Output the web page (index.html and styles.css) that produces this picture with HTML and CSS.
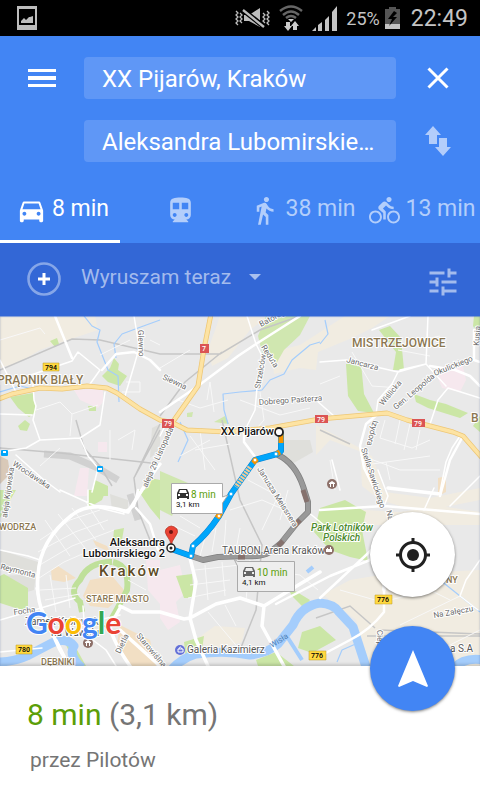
FILE: index.html
```html
<!DOCTYPE html>
<html lang="pl">
<head>
<meta charset="utf-8">
<meta name="viewport" content="width=device-width, initial-scale=1">
<title>Trasa</title>
<link rel="stylesheet" href="styles.css">
</head>
<body>
<div class="status">
  <svg class="status-shot" width="20" height="24" viewBox="0 0 20 24"><path fill="#bdbdbd" fill-rule="evenodd" d="M0 0H20V24H0ZM2 3V19H18V3Z"/><path fill="#bdbdbd" d="M4 17V15L7 12L9 14L12 11H13L16 10V17Z"/></svg>
  <svg width="35" height="24" viewBox="0 0 35 24" fill="none" stroke="#bdbdbd"><path stroke-width="1.300" d="M1 5L3 7L1 9L3 11L1 13L3 15L1 17L3 19M5 7L7 9L5 11L7 13L5 15L7 17M28 7L30 9L28 11L30 13L28 15L30 17M32 5L34 7L32 9L34 11L32 13L34 15L32 17L34 19"/><path fill="#bdbdbd" stroke="none" d="M9 9H14L25 2V21L14 15H9Z"/><path stroke="#000" stroke-width="5" d="M8 4L28 20"/><path stroke-width="2.300" d="M8 4L29 21"/></svg>
  <svg width="24" height="26" viewBox="0 0 24 26" fill="none" stroke="#666" stroke-width="2.4"><path d="M1 6Q12 -3 23 6M4 10Q12 3 20 10M7 13Q12 9 17 13"/><path fill="#ccc" stroke="none" d="M9 14H15L12 17ZM7 17H11V21H13L9 26L5 21H7ZM14 25V21H12L16 16L20 21H18V25Z"/></svg>
  <svg width="25" height="25" viewBox="0 0 25 25" fill="#c4c4c4"><path d="M0 25L4 21V25ZM6 19L10 16V25H6ZM13 14L17 10V25H13ZM20 6L25 0V25H20Z"/></svg>
  <span class="status-percent">25%</span>
  <svg width="15" height="22" viewBox="0 0 15 22"><path fill="#555" d="M4 0H11V2H15V17H0V2H4Z"/><path fill="#c4c4c4" d="M0 17H15V22H0Z"/><path fill="#000" d="M9 4L3 12H7L4 19L12 10H8L12 6Z"/></svg>
  <span class="status-time">22:49</span>
</div>

<header class="route">
  <form class="route-form">
    <button type="button" class="icon-btn" aria-label="Menu"><svg width="28" height="18" viewBox="0 0 28 18"><path fill="#fff" d="M0 0H28V3H0ZM0 7H28V11H0ZM0 15H28V18H0Z"/></svg></button>
    <input class="field" type="text" aria-label="Punkt początkowy" value="XX Pijarów, Kraków">
    <button type="button" class="icon-btn" aria-label="Zamknij"><svg width="22" height="22" viewBox="0 0 22 22"><path stroke="#fff" stroke-width="3" d="M1.500 1.500L20.500 20.500M20.500 1.500L1.500 20.500"/></svg></button>
    <input class="field field-to" type="text" aria-label="Cel podróży" value="Aleksandra Lubomirskiego 2">
    <button type="button" class="icon-btn" aria-label="Zamień"><svg width="28" height="30" viewBox="0 0 28 30"><path fill="#b3cdfb" d="M9 0L17 9H13V18H5V9H1ZM15 12H23V21H27L19 30L11 21H15Z"/></svg></button>
  </form>
  <nav class="modes" aria-label="Środek transportu">
    <button type="button" class="mode mode-on"><svg width="31" height="31" viewBox="0 0 24 24"><path d="M18.920 6.010C18.720 5.420 18.160 5 17.500 5h-11c-.66 0-1.210.42-1.420 1.010L3 12v8c0 .55.450 1 1 1h1c.55 0 1-.45 1-1v-1h12v1c0 .55.450 1 1 1h1c.55 0 1-.45 1-1v-8l-2.080-5.990zM6.500 16c-.83 0-1.500-.67-1.500-1.500S5.670 13 6.500 13s1.500.67 1.500 1.500S7.330 16 6.500 16zm11 0c-.83 0-1.500-.67-1.500-1.500s.67-1.500 1.500-1.500 1.500.67 1.500 1.500-.67 1.500-1.500 1.500zM5 11l1.500-4.500h11L19 11H5z"/></svg><span>8 min</span></button>
    <button type="button" class="mode" aria-label="Transport publiczny"><svg width="31" height="31" viewBox="0 0 24 24"><path d="M12 2c-4.420 0-8 .5-8 4v9.500C4 17.430 5.570 19 7.500 19L6 20.500v.5h12v-.5L16.500 19c1.930 0 3.500-1.570 3.500-3.500V6c0-3.500-3.580-4-8-4zM7.500 17c-.83 0-1.500-.67-1.500-1.500S6.670 14 7.500 14s1.500.67 1.500 1.500S8.330 17 7.500 17zm3.500-6H6V6h5v5zm5.500 6c-.83 0-1.500-.67-1.500-1.500s.67-1.500 1.500-1.500 1.500.67 1.500 1.500-.67 1.500-1.500 1.500zm1.500-6h-5V6h5v5z"/></svg></button>
    <button type="button" class="mode"><svg width="31" height="31" viewBox="0 0 24 24"><path d="M13.500 5.500c1.100 0 2-.9 2-2s-.9-2-2-2-2 .9-2 2 .9 2 2 2zM9.800 8.900L7 23h2.100l1.800-8 2.100 2v6h2v-7.500l-2.100-2 .6-3C14.800 12 16.800 13 19 13v-2c-1.900 0-3.500-1-4.300-2.400l-1-1.600c-.4-.6-1-1-1.700-1-.3 0-.5.1-.8.1L6 8.300V13h2V9.600l1.800-.7"/></svg><span>38 min</span></button>
    <button type="button" class="mode"><svg width="31" height="31" viewBox="0 0 24 24"><path d="M15.500 5.500c1.100 0 2-.9 2-2s-.9-2-2-2-2 .9-2 2 .9 2 2 2zM5 12c-2.800 0-5 2.200-5 5s2.200 5 5 5 5-2.200 5-5-2.200-5-5-5zm0 8.500c-1.900 0-3.500-1.600-3.500-3.500s1.600-3.500 3.500-3.500 3.500 1.600 3.500 3.500-1.600 3.500-3.500 3.500zm5.800-10l2.400-2.400.8.8c1.300 1.300 3 2.100 5.100 2.100V9c-1.500 0-2.700-.6-3.600-1.500l-1.900-1.900c-.5-.4-1-.6-1.600-.6s-1.100.2-1.400.6L7.800 8.400c-.4.4-.6.9-.6 1.400 0 .6.200 1.100.6 1.400L11 14v5h2v-6.200l-2.200-2.300zM19 12c-2.800 0-5 2.200-5 5s2.200 5 5 5 5-2.200 5-5-2.200-5-5-5zm0 8.500c-1.900 0-3.500-1.600-3.500-3.500s1.600-3.500 3.500-3.500 3.500 1.600 3.500 3.500-1.600 3.500-3.500 3.500z"/></svg><span>13 min</span></button>
  </nav>
</header>

<div class="options">
  <button type="button" class="icon-btn" aria-label="Dodaj przystanek"><svg width="34" height="34" viewBox="0 0 34 34" fill="none"><circle cx="17" cy="17" r="15.500" stroke="#86a6e8" stroke-width="2.600"/><path stroke="#fff" stroke-width="3" d="M11 17H23M17 11V23"/></svg></button>
  <div class="depart">
    <select class="depart-select" aria-label="Czas wyjazdu"><option>Wyruszam teraz</option></select>
    <svg class="depart-caret" width="12" height="6" viewBox="0 0 12 6"><path fill="#a9c0ee" d="M0 0H12L6 6Z"/></svg>
  </div>
  <button type="button" class="icon-btn" aria-label="Opcje trasy"><svg width="36" height="36" viewBox="0 0 24 24"><path fill="#a3bbed" d="M3 17v2h6v-2H3zM3 5v2h10V5H3zm10 16v-2h8v-2h-8v-2h-2v6h2zM7 9v2H3v2h4v2h2V9H7zm14 4v-2H11v2h10zm-6-4h2V7h4V5h-4V3h-2v6z"/></svg></button>
</div>

<main class="map">
<svg class="map-canvas" viewBox="0 316 480 350" preserveAspectRatio="xMidYMid slice" role="img" aria-label="Mapa Krakowa z trasą">
  <rect y="316" width="480" height="350" fill="#e9e9e9"/>
  <!-- suburbs -->
  <g fill="#f1ece1">
    <path d="M0 316H95L98 330L80 336L62 342L40 350L20 362L0 368ZM220 316H268L250 330L228 358L212 366L208 350ZM272 352L300 345L345 316H390L372 328L352 338L318 352L316 370L300 368L274 374Z"/>
    <path d="M316 425L360 448L362 486L380 500L420 512L480 500V488L430 498L385 492L372 456L330 440L316 455ZM320 525H480V512L440 506L400 512L330 508ZM320 596L350 580L380 575L480 570V666H370L356 620L325 596ZM195 640L215 626L245 628L242 642L215 650Z"/>
  </g>
  <path fill="#dfdfdb" d="M282 440H310L313 452L292 464L284 458ZM0 550L38 562V572L0 566ZM110 494L128 500V512L112 510ZM0 576L36 574L34 590L0 600ZM152 428L160 424V450L150 458Z"/>
  <path fill="#f6e8ee" d="M74 390L103 388V402L98 408L80 400ZM98 442H107V452H98ZM80 468H89L87 496H74ZM444 366L462 362L466 380L460 392L442 388L438 378ZM160 570L180 565L186 592L176 602L180 622L168 630L160 618ZM146 560H160V604L148 590Z"/>
  <path fill="#f2dfc4" d="M90 580L112 576L124 590L120 598L108 608L90 606L83 596ZM51 570L58 566L76 578L64 582L52 580ZM120 625L150 640L156 666H132L116 650ZM438 478L446 476V492L438 496ZM93 540L107 546L110 552L96 546Z"/>
  <path fill="#d9c9b8" d="M0 456L8 460L10 474L0 484Z"/>
  <!-- parks -->
  <g fill="#cbe6a6">
    <path d="M50 341L57 338L59 344L55 347ZM114 358L119 364L118 370L127 376L120 386L108 382L102 376L110 368ZM10 397L33 393L36 412L29 417L18 408ZM18 426L25 420L30 424L27 431L20 430ZM88 406L96 406V411L89 411ZM95 480L108 486L108 496H92ZM150 478L160 480V495L145 490Z"/>
    <path d="M266 316H310L300 335L284 350L276 364L262 352L258 336ZM214 422L225 416L229 424ZM187 413L193 412L192 417H187ZM160 471L195 486V502H178L172 516L160 510Z" opacity=".85"/>
    <path d="M379 330L390 326L401 338L404 370H393L396 352ZM346 364L361 363L364 394L374 413L358 411L348 396ZM414 394L430 400L446 404L468 413L460 418L428 408L416 402ZM474 316H480V338L473 326ZM473 426L480 416V432Z"/>
    <path d="M320 508L345 500L366 512L362 530L368 561L350 557L330 550L314 532ZM0 576L4 574L28 588V612L0 603ZM0 490H16L0 518ZM88 490H106L102 500L88 508ZM138 490H160V520L150 508ZM114 530L124 528L121 546L113 540ZM176 576L192 574L194 598L184 598ZM184 642L204 636L201 656L186 660ZM287 586L310 600L304 608L292 596ZM302 632L320 626L336 640L312 653L298 648ZM256 660L276 652L294 666H258ZM66 645L76 648L86 666H76Z"/>
    <path fill="none" stroke="#bfe09a" stroke-width="6" d="M112 562Q88 562 80 580Q68 592 80 602L82 612M113 562Q130 566 127 590Q116 612 106 628"/>
  </g>
  <!-- rail -->
  <g fill="none" stroke="#c6c6c6" stroke-width="1.500">
    <path d="M0 370L72 339L100 340L160 354L220 354L260 330L300 316M160 416L185 382L222 352M0 448L60 453L160 464M76 420L84 448L100 466L112 486M160 430L134 478L138 510L150 540M160 424L134 478M222 420L240 500L262 545L256 610L240 650M320 430L350 444M316 618L350 606L375 628M367 636H480M380 630L480 634"/>
    <path stroke-width="7" d="M44 454L70 456L98 468L118 480M130 494L138 520" opacity=".7"/>
  </g>
  <!-- water -->
  <g fill="none" stroke="#a4cdfc" stroke-linejoin="round">
    <path stroke-width="1.200" d="M84 316L92 326L100 330L97 342L108 370L118 376L119 402M160 320L138 328L122 334L114 344L116 358M228 424L224 410L223 394L240 392L262 390L270 380L284 374L292 360L310 345L320 342M180 422L188 440L178 462M320 344L328 334L325 320M337 662L342 650L360 642M440 580L480 612M0 392L20 386L33 389"/>
    <path stroke-width="9" d="M-4 662Q14 662 27 656L50 644Q66 636 74 646Q68 656 82 668M172 669Q182 658 196 654Q226 650 250 655Q268 653 278 644L293 625Q301 606 320 603Q334 604 339 612L353 627L366 667M454 668Q464 657 484 660"/>
    <path stroke-width="4" d="M288 638L302 660M307 572L313 567" />
  </g>
  <!-- minor streets -->
  <g fill="none" stroke="#f8f8f8" stroke-width="1">
    <path d="M0 340L40 328L45 334M100 355L130 340M36 410L60 402L72 414L98 405M72 414L70 436M40 466L60 448M118 440L135 430L132 450M110 430V460M160 368L190 350M150 340L160 345M122 392H140V382H126M178 400L200 408L228 400M207 400L210 382L214 412M240 400L280 415L310 408M260 392L264 420L250 436M190 436L215 470M195 450L230 444M180 456L210 440M200 430L205 470M320 384L340 376M352 352L372 386M372 386L400 388M398 350L430 356M420 340L440 336M385 420L380 438L412 448L430 440M400 420L395 444M410 424L404 450M420 430L416 450M360 455L400 470L440 470M372 464L430 456M386 462L390 480M330 460L335 490"/>
    <path d="M45 520L70 556M58 514L85 548M72 508L96 540M86 502L104 530M40 540L70 520L100 510M38 552L75 532L108 520M38 566L72 546L114 530M36 580L64 562L96 548M45 600L80 594M50 575L56 612M66 575L70 608M40 590L76 588M190 560L196 540L214 530M200 556L206 534M212 552L216 528M224 550L226 520M236 550L240 528M195 570L240 565L262 572M205 565L208 600M222 562L225 596M190 585L230 580M188 598L226 590M250 560L246 600M262 570L300 575L318 590M208 612L240 650M225 605L236 626M180 516L200 528M172 525L195 536M230 510L262 500L285 510M248 480L278 496L262 530M288 490L280 520M84 620L110 626M128 580L146 590M128 594L145 600M390 600L430 590L450 600M400 625L460 596M340 590L375 600M440 650L480 630"/>
  </g>
  <g fill="none" stroke="#fff" stroke-linejoin="round" stroke-linecap="round">
    <path stroke-width="1.500" d="M0 360L16 392M28 376L72 361L78 352L100 370L90 384M33 384L34 400L36 406L33 420L40 440L80 438L100 425L105 392M0 414L32 415M0 452L26 448L40 440M80 438L88 456L98 468L92 492M16 455L44 480L60 492M125 396L134 366L138 352M0 550L28 556L40 560M134 316L140 352M247 316L256 344L262 356L264 366L257 388L255 410L244 432M340 490L332 460M60 490L100 508L124 514M88 508V490M0 620L75 598M83 606L85 634L106 650L116 666M82 624L120 615M0 652L42 648M57 640L70 666M36 588L40 606L56 632M400 370L426 364M428 316L426 364L446 386M426 364L398 372L346 360L320 362M398 372L392 384L378 400L376 414M430 424L438 400L448 388L480 398M378 470L388 496L384 506M440 492L446 462L452 448L460 436M480 476L450 506M372 330L410 316M160 436L166 424M316 400L334 416M480 560L466 580L460 596L478 610M308 512L330 530M424 510L434 488"/>
    <path stroke-width="2.500" d="M55 316L72 358M102 370L116 354L134 352L150 360L160 370M160 412L198 386L238 356L256 344L300 316M244 432L244 442L256 458M378 414L366 424L360 446L364 468L376 492L384 506M124 512L134 506L138 490M136 508L150 524L158 550M480 386L470 376L455 370L430 366M480 362L474 360V330L478 330M320 598L380 542L370 560L330 576L276 604M384 506L320 510M384 506L480 514M384 590V612Q370 630 350 640L320 656M463 436L450 460L440 496"/>
    <path stroke-width="3.500" d="M142 490L128 512Q90 500 72 515Q40 540 38 575Q36 600 44 615L60 650L68 664M190 558L196 582L190 618M160 612L184 619L190 618L216 604L240 598L264 606Q290 590 320 572M190 618L196 640L208 666M264 606L262 626L284 666M120 606L132 612L160 612M142 490Q152 474 160 464M440 494L388 488M120 608L110 626Q112 640 130 666M160 666L120 630M384 570L384 590"/>
  </g>
  <!-- main roads -->
  <g fill="none" stroke-linejoin="round">
    <g stroke="#eec775" stroke-width="5"><path d="M-4 400L12 394L40 388L62 389L87 386L107 388L117 393L140 409L160 420L173 423L187 430L227 432L270 428L320 419L387 413L407 420L453 432L463 436L484 460"/><path d="M211 314L204 349L198 386L172 423"/></g>
    <g stroke="#fde3a3" stroke-width="3.500"><path d="M-4 400L12 394L40 388L62 389L87 386L107 388L117 393L140 409L160 420L173 423L187 430L227 432L270 428L320 419L387 413L407 420L453 432L463 436L484 460"/><path d="M211 314L204 349L198 386L172 423"/></g>
  </g>
  <!-- routes -->
  <g fill="none" stroke-linejoin="round" stroke-linecap="round">
    <path stroke="#808080" stroke-width="6" d="M278 455Q295 463 303 486L308 502V512L297 523L281 543L270 552Q262 557 248 556L218 557L203 560L191 556"/>
    <path stroke="#999" stroke-width="4.500" d="M278 455Q295 463 303 486L308 502V512L297 523L281 543L270 552Q262 557 248 556L218 557L203 560L191 556"/>
    <path stroke="#85716d" stroke-width="5" stroke-linecap="butt" d="M303 490L307 502M300 520L294 526M283 541L278 546M245 557H238"/>
    <path stroke="#0b80cf" stroke-width="6" d="M281 434V451L277 454L255 460L231 494L219 516Q207 534 193 546L191 556L174 550"/>
    <path stroke="#00a6fb" stroke-width="5" d="M281 434V451L277 454L255 460L231 494L219 516Q207 534 193 546L191 556L174 550"/>
    <path stroke="#f79400" stroke-width="5" stroke-linecap="butt" d="M281 433V443M280 452L276 454M257 459L253 463M221 512L217 518"/>
    <path stroke="#f6c994" stroke-width="5" stroke-linecap="butt" stroke-dasharray="2 1" d="M250 467L236 487"/>
  </g>
  <g fill="#fff" stroke="#00a6fb" stroke-width="1"><circle cx="276" cy="454" r="2"/><circle cx="231" cy="494" r="2"/><circle cx="193" cy="546" r="2"/><circle cx="191" cy="556" r="2"/><circle cx="255" cy="460" r="2" stroke="#f79400"/><circle cx="219" cy="516" r="2" stroke="#f79400"/></g>
  <!-- street names -->
  <g class="t-street">
    <text transform="translate(138 330) rotate(88)">Glewno</text>
    <text transform="translate(12 465) rotate(34)">Wrocławska</text>
    <text transform="translate(7 518) rotate(-82)">aleja Kijowska</text>
    <text transform="translate(147 488) rotate(-66)">aleja 29 Listopada</text>
    <text transform="translate(162 379) rotate(25)">Siewna</text>
    <text transform="translate(261 327) rotate(-28)">Batorego</text>
    <text transform="translate(261 347) rotate(58)">Reduta</text>
    <text transform="translate(260 389) rotate(-80)">Strzelców</text>
    <text transform="translate(259 405) rotate(-4)">Dobrego Pasterza</text>
    <text transform="translate(257 469) rotate(58)">Janusza Meissnera</text>
    <text transform="translate(346 362) rotate(15)">Jancarza</text>
    <text transform="translate(383 406) rotate(-50)">Wiślicka</text>
    <text transform="translate(396 410) rotate(-40)">Gen. Leopolda</text>
    <text transform="translate(435 376) rotate(-22)">Okulickiego</text>
    <text transform="translate(373 420) rotate(104)">Izydora</text>
    <text transform="translate(361 449) rotate(72)">Stella-Sawickiego</text>
    <text transform="translate(386 511) rotate(75)">Na</text>
    <text transform="translate(0 569) rotate(14)">Reymonta</text>
    <text transform="translate(14 615) rotate(-8)">Focha</text>
    <text transform="translate(120 654) rotate(-64)">Dietla</text>
    <text transform="translate(136 636) rotate(50)">Starowiślna</text>
    <text transform="translate(434 618) rotate(-10)">Na Załęczu</text>
    <text transform="translate(377 630) rotate(88)">Ciep</text>
    <text transform="translate(479 346) rotate(-86)">Kusia</text>
    <text class="t-water" transform="translate(272 648) rotate(-32)">Wisła</text>
  </g>
  <!-- districts -->
  <g class="t-area">
    <text x="-3" y="384" font-size="12">PRĄDNIK BIAŁY</text>
    <text x="352" y="347" font-size="12">MISTRZEJOWICE</text>
    <text x="471" y="422" font-size="12">B</text>
    <text x="-1" y="530" font-size="9">WODRZA</text>
    <text x="86" y="602" font-size="9">STARE MIASTO</text>
    <text x="41" y="665" font-size="9">DĘBNIKI</text>
    <text x="446" y="583" font-size="9">NY</text>
  </g>
  <text class="t-city" x="99" y="576">Kraków</text>
  <g class="t-park"><text x="311" y="531">Park Lotników</text><text x="323" y="541">Polskich</text></g>
  <g class="t-poi"><text x="222" y="554">TAURON Arena Kraków</text><text x="187" y="653">Galeria Kazimierz</text><text x="450" y="652">a S.A</text><text x="25" y="625">Zamek Królewski</text><text x="51" y="636">na Wawelu</text></g>
  <!-- shields -->
  <g class="shield">
    <path fill="#ffd940" stroke="#b99b26" stroke-width=".5" d="M43 363H59V371H43ZM16 645H32V654H16ZM375 595H392V604H375ZM309 651H326V660H309Z"/>
    <text x="51" y="370">794</text><text x="24" y="652">780</text><text x="383" y="602">776</text><text x="317" y="658">776</text>
    <path fill="#db5454" d="M200 344H209V353H200ZM162 419H174V428H162ZM315 415H328V423H315ZM412 419H425V427H412Z"/>
    <g fill="#fff"><text x="204" y="351">7</text><text x="168" y="426">79</text><text x="321" y="422">79</text><text x="418" y="426">79</text></g>
  </g>
  <!-- places -->
  <g fill="#00a6fb"><rect x="1" y="450" width="7" height="6" rx="1"/><rect x="97" y="466" width="6" height="6" rx="1"/></g>
  <path fill="#fff" d="M3 451H6V453H3ZM98 468H102V470H98Z"/>
  <g fill="#8d7069"><circle cx="332" cy="484" r="5"/><circle cx="329" cy="550" r="5"/><circle cx="88" cy="643" r="5"/></g>
  <path fill="#fff" d="M329 483L332 481L335 483V484H329ZM330 484H331V487H330ZM333 484H334V487H333ZM326 552V549H327V548H328V549H330V547H331V549H332V552ZM85 642L88 640L91 642V643H85ZM86 643H87V646H86ZM89 643H90V646H89Z"/>
  <circle cx="180" cy="650" r="5" fill="#6471d8"/><path fill="none" stroke="#fff" d="M178 649H183V652H178ZM179 649Q180 645 182 649"/>
  <!-- pins -->
  <path fill="#ea4335" stroke="#a52714" stroke-width=".6" d="M171 546Q171 541 167 536Q164 532 166 529Q171 523 177 529Q179 532 175 537Q172 541 171 546Z"/><circle cx="171" cy="532" r="2" fill="#6d1410"/>
  <circle cx="171" cy="548" r="4" fill="#fff" stroke="#222" stroke-width="1.500"/><circle cx="171" cy="548" r="1.500" fill="#222"/>
  <circle cx="279" cy="432" r="4" fill="#fff" stroke="#222" stroke-width="1.800"/>
  <g class="t-pin"><text x="274" y="435">XX Pijarów</text><text x="165" y="546">Aleksandra</text><text x="165" y="557">Lubomirskiego 2</text></g>
  <!-- route callouts -->
  <path fill="#fff" stroke="#aaa" d="M171.500 483.500H222.500V497L228 495L222.500 503V513.500H171.500Z"/>
  <path fill="#eee" stroke="#aaa" d="M237.500 561.500H294.500V591.500H237.500V566L234 559Z"/>
  <path fill="#333" fill-rule="evenodd" d="M177 499V493L179 489H187L189 493V499H187V498H179V499ZM179 493H187L186 490H180ZM178 494V496H180V494ZM186 494V496H188V494Z"/>
  <path fill="#666" fill-rule="evenodd" d="M243 577V571L245 567H253L255 571V577H253V576H245V577ZM245 571H253L252 568H246ZM244 572V574H246V572ZM252 572V574H254V572Z"/>
  <g class="t-time"><text x="191" y="498">8 min</text><text x="257" y="576">10 min</text></g>
  <g class="t-dist"><text x="176" y="507">3,1 km</text><text x="242" y="585">4,1 km</text></g>
  <text class="logo" x="26" y="634"><tspan fill="#4285f4">G</tspan><tspan fill="#ea4335">o</tspan><tspan fill="#fbbc05">o</tspan><tspan fill="#4285f4">g</tspan><tspan fill="#34a853">l</tspan><tspan fill="#ea4335">e</tspan></text>
</svg>
<div class="fabs">
  <button type="button" class="fab" aria-label="Moja lokalizacja"><svg width="34" height="34" viewBox="0 0 34 34" fill="none" stroke="#212121"><circle cx="17" cy="17" r="12.500" stroke-width="3"/><circle cx="17" cy="17" r="6" fill="#212121" stroke="none"/><path stroke-width="3" d="M17 0V5M17 29V34M0 17H5M29 17H34"/></svg></button>
  <button type="button" class="fab fab-go" aria-label="Nawiguj"><svg width="30" height="38" viewBox="0 0 30 38"><path fill="#fff" d="M15 0L30 36L29 37L15 31L1 37L0 36Z"/></svg></button>
</div>
</main>

<section class="summary">
  <h1 class="summary-title"><span class="summary-time">8 min</span> (3,1 km)</h1>
  <p class="summary-via">przez Pilotów</p>
</section>
</body>
</html>
```
FILE: styles.css
```css
* { box-sizing: border-box; }
body {
  margin: 0;
  min-height: 100vh;
  display: flex;
  flex-direction: column;
  font-family: Roboto, "Liberation Sans", sans-serif;
  background: #fff;
}
button, input, select { font: inherit; border: 0; background: none; padding: 0; color: inherit; }
svg { flex: none; }

.status {
  display: flex;
  align-items: center;
  gap: 9px;
  height: 36px;
  padding: 0 12px 0 17px;
  background: #000;
  color: #c4c4c4;
}
.status-shot { margin-right: auto; }
.status-percent { font-size: 18px; margin-right: -4px; }
.status-time { font-size: 23px; margin-left: 2px; }

.route { background: #4285f4; color: #fff; }
.route-form {
  display: grid;
  grid-template-columns: 84px 1fr 84px;
  row-gap: 21px;
  padding-top: 21px;
}
.icon-btn { display: flex; align-items: center; justify-content: center; }
.field {
  height: 42px;
  min-width: 0;
  padding: 2px 18px 0;
  border-radius: 4px;
  background: #5f97f6;
  font-size: 24px;
  text-overflow: ellipsis;
}
.field-to { grid-column: 2; }
.modes { display: grid; grid-template-columns: repeat(4, 1fr); margin-top: 12px; }
.mode {
  display: flex;
  align-items: center;
  justify-content: center;
  gap: 5px;
  height: 69px;
  padding-top: 7px;
  border-bottom: 3px solid transparent;
  font-size: 23px;
  white-space: nowrap;
  color: #b3cefb;
}
.mode span { padding-bottom: 4px; margin-right: -5px; }
.mode svg { fill: currentColor; }
.mode-on { color: #fff; border-bottom-color: #fff; }

.options {
  display: grid;
  grid-template-columns: 81px 1fr 75px;
  height: 73px;
  background: #3367d6;
}
.options .icon-btn { padding: 0 0 2px 6px; }
.options .icon-btn:last-child { padding: 4px 0 0; }
.depart { display: flex; align-items: center; gap: 17px; padding-bottom: 6px; }
.depart-select { appearance: none; font-size: 21px; color: #a3bbed; }
.depart-caret { pointer-events: none; }

.map {
  position: relative;
  flex: 1;
  min-height: 350px;
}
.map::after {
  content: "";
  position: absolute;
  inset: 0;
  pointer-events: none;
  box-shadow: inset 0 1px 1px rgba(51, 103, 214, .6), inset 0 -2px 3px rgba(0, 0, 0, .15);
}
.map-canvas { position: absolute; width: 100%; height: 100%; display: block; }
.map-canvas text { paint-order: stroke; stroke: #fff; stroke-width: 2px; stroke-linejoin: round; }
.t-street { font-size: 8px; fill: #6b6b6b; }
.map-canvas .t-water { fill: #4d80b8; stroke: none; }
.t-area { font-weight: 500; fill: #8b7751; }
.t-city { font-size: 15px; font-weight: 500; letter-spacing: 2px; fill: #5e4b26; }
.t-park { font-size: 10px; font-style: italic; font-weight: 500; fill: #4b8a2c; }
.t-poi { font-size: 10px; fill: #555; }
.map-canvas .shield text { font-size: 7px; font-weight: 500; text-anchor: middle; stroke: none; }
.t-pin { font-size: 11px; font-weight: 500; text-anchor: end; fill: #111; }
.map-canvas .t-time text { font-size: 10px; fill: #5b9e08; stroke: none; }
.map-canvas .t-dist text { font-size: 8px; fill: #111; stroke: none; }
.map-canvas .logo { font-family: Lato, sans-serif; font-size: 30px; font-weight: 700; stroke-width: 2px; }

.fabs {
  position: absolute;
  z-index: 1;
  right: 25px;
  bottom: -45px;
  display: grid;
  gap: 29px;
}
.fab {
  display: flex;
  align-items: center;
  justify-content: center;
  width: 85px;
  height: 85px;
  border-radius: 50%;
  background: #fff;
  box-shadow: 0 1px 3px rgba(0, 0, 0, .5);
}
.fab-go { background: #4285f4; }

.summary { padding: 30px 27px 28px; color: #757575; }
.summary-title { margin: 0; font-size: 30px; line-height: 38px; font-weight: 400; }
.summary-time { color: #5b9e08; }
.summary-via { margin: 13px 0 0 3px; font-size: 21px; line-height: 26px; }
```
